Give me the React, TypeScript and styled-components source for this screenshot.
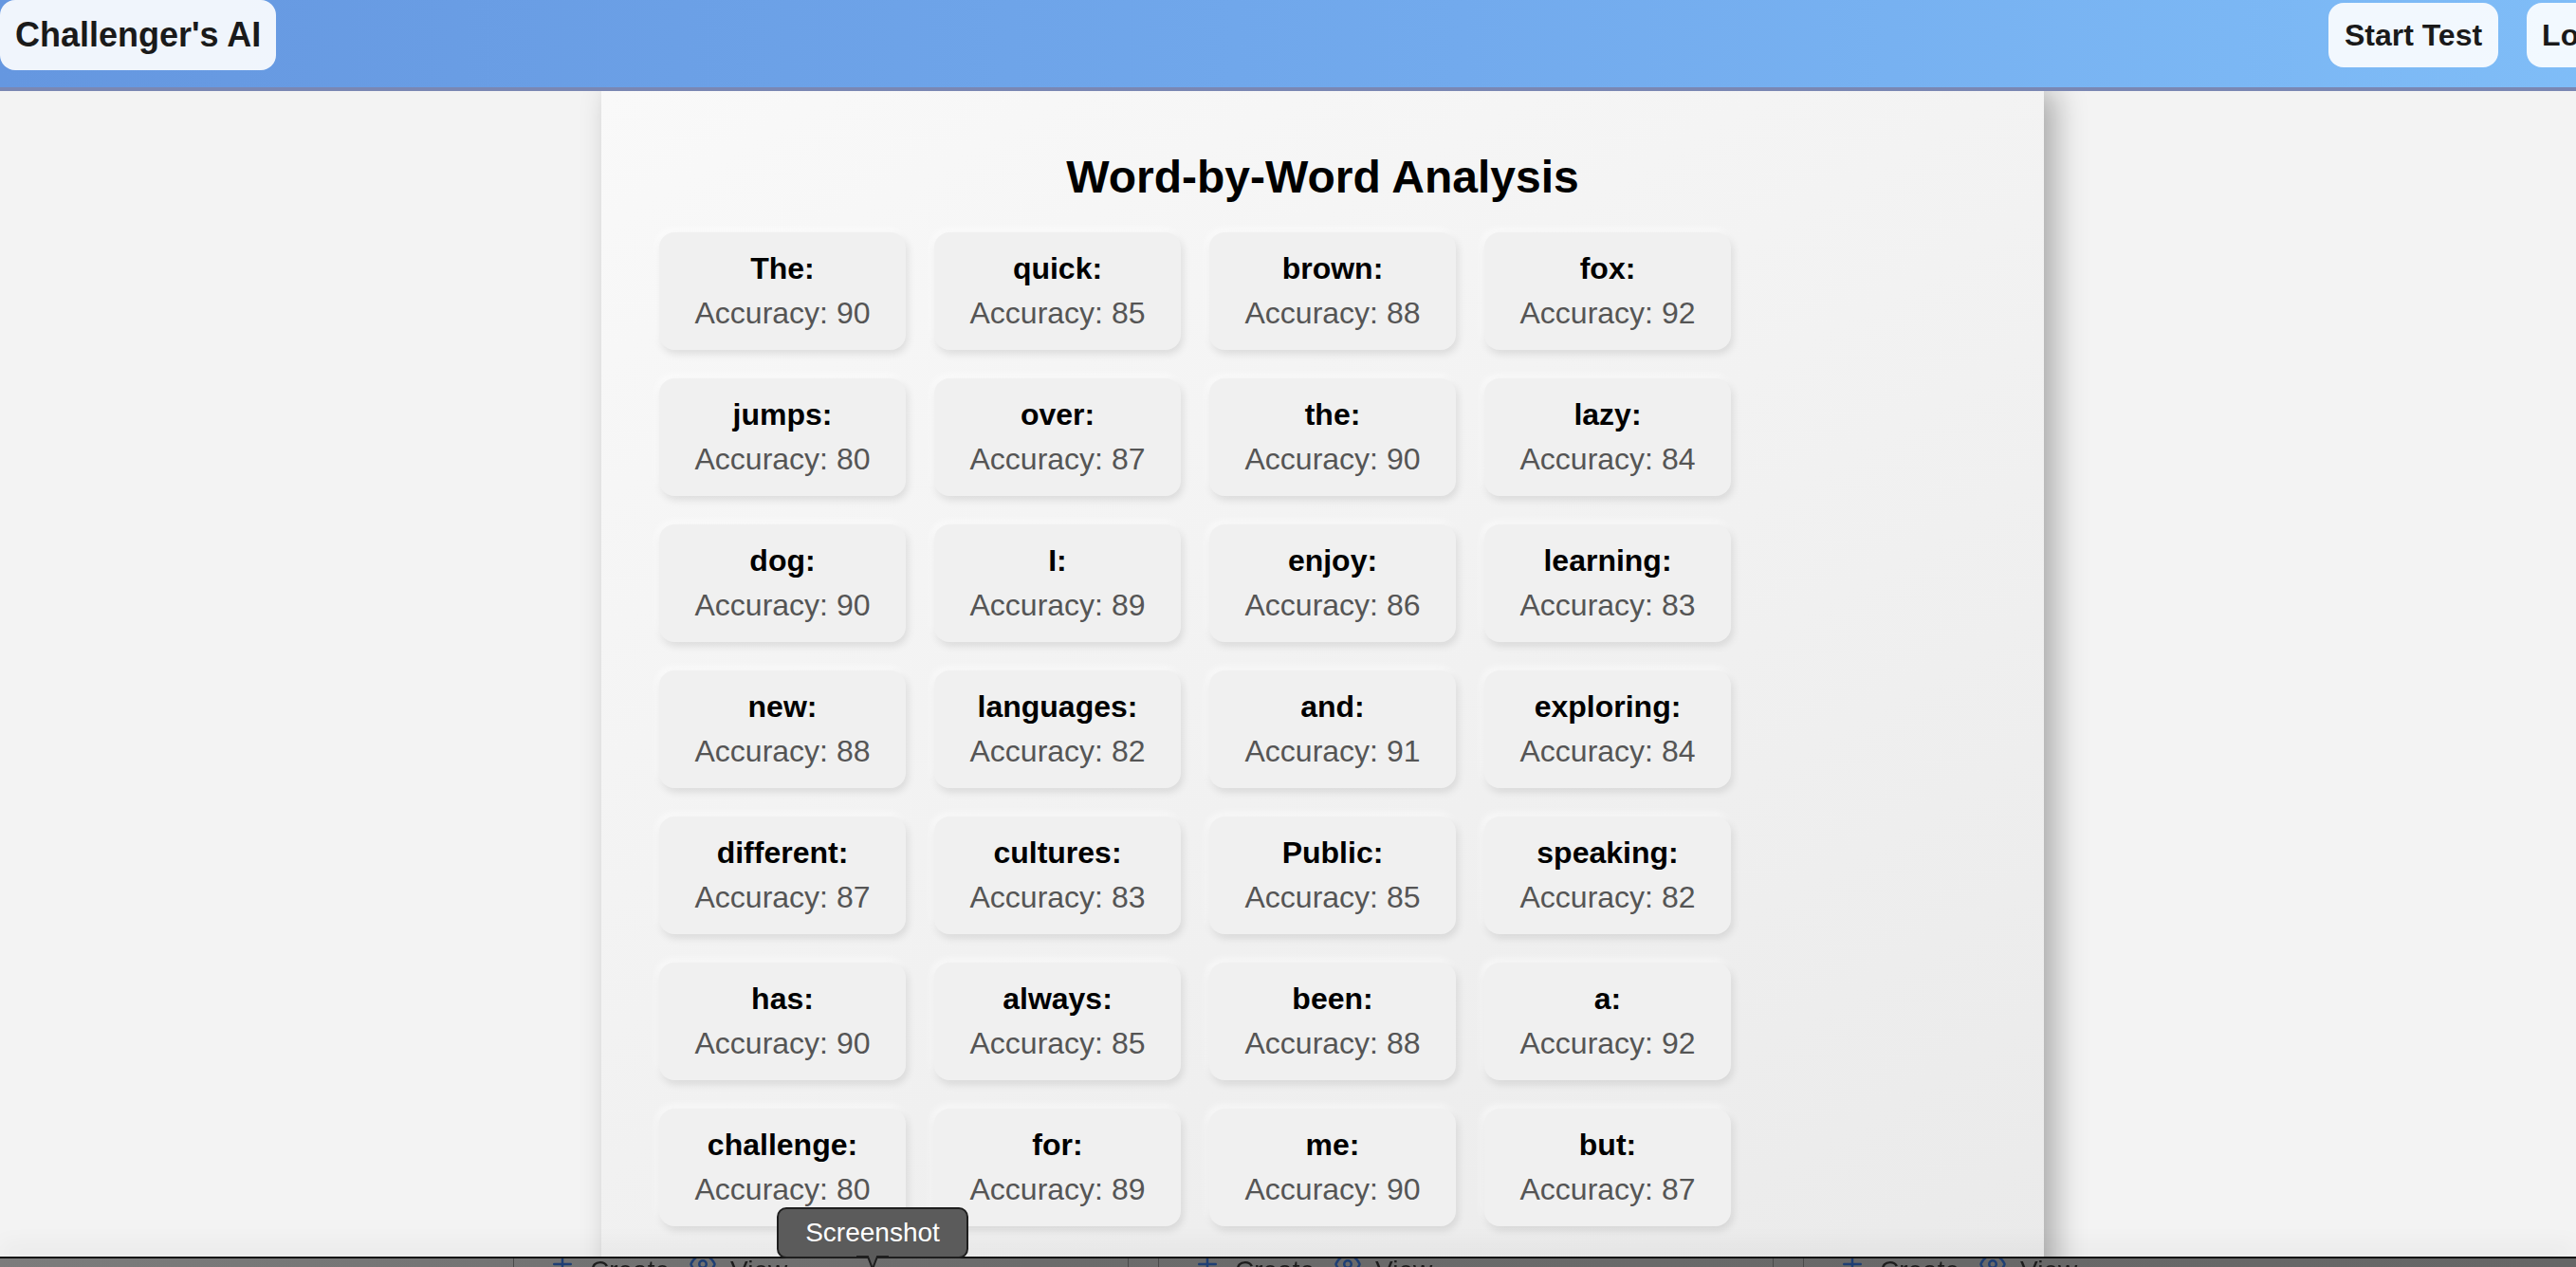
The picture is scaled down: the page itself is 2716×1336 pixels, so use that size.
import React from "react";
import styled, { createGlobalStyle } from "styled-components";
import { Plus, Eye } from "lucide-react";

const GlobalStyle = createGlobalStyle`
  html, body {
    margin: 0;
    padding: 0;
    background: #f3f3f3;
    overflow: hidden;
    font-family: "Liberation Sans", Arial, Helvetica, sans-serif;
  }
  * { box-sizing: border-box; }
`;

const Page = styled.div`
  min-height: 100vh;
  display: flex;
  flex-direction: column;
`;

const Header = styled.header`
  height: 96px;
  margin-right: -89px;
  padding: 2px 0 20px;
  display: flex;
  align-items: center;
  justify-content: space-between;
  background: linear-gradient(90deg, #6597e0 0%, #72aaed 55%, #80bef8 100%);
  border-bottom: 4px solid #7a87b3;
  position: relative;
  z-index: 2;
`;

const Brand = styled.div`
  height: 74px;
  padding: 0 16px;
  display: flex;
  align-items: center;
  background: rgba(255, 255, 255, 0.9);
  border-radius: 16px;
  font-size: 36px;
  font-weight: 700;
  color: #1a1a1a;
  white-space: nowrap;
`;

const Nav = styled.nav`
  display: flex;
  gap: 30px;
`;

const NavButton = styled.button`
  height: 68px;
  padding: 0 16.5px;
  border: none;
  background: rgba(255, 255, 255, 0.9);
  border-radius: 16px;
  font-family: inherit;
  font-size: 32px;
  font-weight: 700;
  color: #1a1a1a;
  white-space: nowrap;
`;

const Main = styled.main`
  display: flex;
  padding-left: 634px;
`;

const Panel = styled.section`
  width: 1521px;
  min-height: 1400px;
  padding: 63px 61px 60px;
  background: linear-gradient(150deg, #f9f9f9 0%, #e9e9e9 100%);
  box-shadow: 12px 0 30px rgba(0, 0, 0, 0.3);
`;

const Title = styled.h2`
  margin: 0 0 31px;
  text-align: center;
  font-size: 48px;
  font-weight: 700;
  color: #000;
  line-height: normal;
  padding-right: 0;
`;

const Grid = styled.div`
  display: grid;
  grid-template-columns: repeat(4, 260px);
  gap: 30px;
`;

const Card = styled.div`
  height: 124px;
  padding: 20px 8px;
  display: flex;
  flex-direction: column;
  align-items: center;
  gap: 10px;
  background: #f0f0f0;
  border-radius: 16px;
  box-shadow: 2px 4px 9px rgba(0, 0, 0, 0.11), -2px -3px 8px rgba(255, 255, 255, 0.75);
`;

const Word = styled.div`
  font-size: 32px;
  line-height: 37px;
  font-weight: 700;
  color: #000;
`;

const Accuracy = styled.div`
  font-size: 32px;
  line-height: 37px;
  color: #555;
`;

const Dock = styled.div`
  position: fixed;
  left: 0;
  right: 0;
  bottom: 0;
  height: 11px;
  overflow: hidden;
  display: flex;
  padding-left: 541px;
  background: linear-gradient(90deg, #7c7c7c 0%, #6b6b6b 40%, #666 100%);
  border-top: 2px solid #111;
  box-shadow: 0 -10px 24px rgba(0, 0, 0, 0.07);
  z-index: 5;
`;

const DockGroup = styled.div`
  width: 680px;
  flex: none;
  display: flex;
  align-items: flex-start;
  border-left: 1.5px solid #4a4a4a;
  position: relative;
`;

const DockEnd = styled.span`
  position: absolute;
  left: 647px;
  top: 0;
  bottom: 0;
  border-left: 1.5px solid #4a4a4a;
`;

const DockItem = styled.span<{ $offset: number }>`
  margin-left: ${(p) => p.$offset}px;
  display: flex;
  align-items: flex-start;
  gap: 14px;
  font-size: 28px;
  line-height: 28px;
  color: #1d1d1d;
  margin-top: -1px;
  svg {
    color: #1f3f74;
    margin-top: -8px;
  }
`;

const Tooltip = styled.div`
  position: fixed;
  left: 819px;
  top: 1273px;
  width: 202px;
  height: 54px;
  display: flex;
  align-items: center;
  justify-content: center;
  background: #5b5b5b;
  border: 2px solid #1e1e1e;
  border-radius: 10px;
  color: #fff;
  font-size: 28px;
  z-index: 6;
`;

const TooltipArrow = styled.svg`
  position: absolute;
  left: 82px;
  top: 49px;
`;

const words: [string, number][] = [
  ["The", 90], ["quick", 85], ["brown", 88], ["fox", 92],
  ["jumps", 80], ["over", 87], ["the", 90], ["lazy", 84],
  ["dog", 90], ["I", 89], ["enjoy", 86], ["learning", 83],
  ["new", 88], ["languages", 82], ["and", 91], ["exploring", 84],
  ["different", 87], ["cultures", 83], ["Public", 85], ["speaking", 82],
  ["has", 90], ["always", 85], ["been", 88], ["a", 92],
  ["challenge", 80], ["for", 89], ["me", 90], ["but", 87],
];

export default function App() {
  return (
    <Page>
      <GlobalStyle />
      <Header>
        <Brand>Challenger's AI</Brand>
        <Nav>
          <NavButton>Start Test</NavButton>
          <NavButton>Logout</NavButton>
        </Nav>
      </Header>
      <Main>
        <Panel>
          <Title>Word-by-Word Analysis</Title>
          <Grid>
            {words.map(([w, a], i) => (
              <Card key={i}>
                <Word>{w}:</Word>
                <Accuracy>Accuracy: {a}</Accuracy>
              </Card>
            ))}
          </Grid>
        </Panel>
      </Main>
      <Dock>
        {[0, 1, 2].map((g) => (
          <DockGroup key={g}>
            <DockItem $offset={36}>
              <Plus size={30} strokeWidth={2} />
              Create
            </DockItem>
            <DockItem $offset={20}>
              <Eye size={30} strokeWidth={2} />
              View
            </DockItem>
            {g < 2 && <DockEnd />}
          </DockGroup>
        ))}
      </Dock>
      <Tooltip>
        Screenshot
        <TooltipArrow width="34" height="16" viewBox="0 0 34 16">
          <path d="M0 1 L12 1 L17 14 L22 1 L34 1" fill="#5b5b5b" stroke="#1e1e1e" strokeWidth="2" />
        </TooltipArrow>
      </Tooltip>
    </Page>
  );
}
